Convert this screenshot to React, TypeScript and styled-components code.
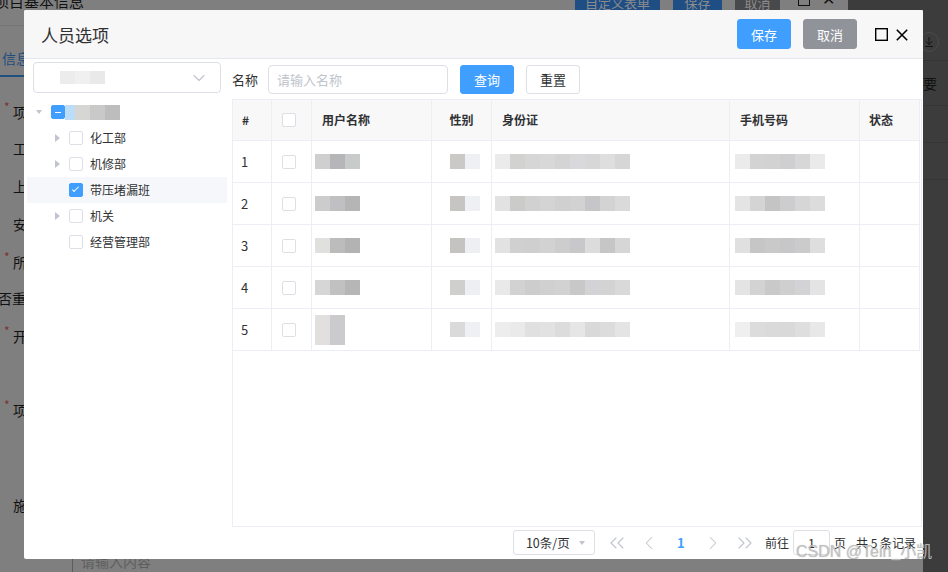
import React from "react";
import styled, { createGlobalStyle, css } from "styled-components";
import {
  ChevronDown,
  ChevronLeft,
  ChevronRight,
  ChevronsLeft,
  ChevronsRight,
  ArrowDownToLine,
} from "lucide-react";

const GlobalStyle = createGlobalStyle`
  html, body { margin: 0; padding: 0; background: #7f7f7f; }
  body { font-family: "Noto Sans CJK SC", "Noto Sans", sans-serif; }
  *, *::before, *::after { box-sizing: border-box; }
`;

/* ---------- page behind the mask ---------- */

const Screen = styled.div`
  position: relative;
  width: 948px;
  height: 572px;
  overflow: hidden;
  background: #7f7f7f;
  display: flex;
  flex-direction: column;
`;

const TopStrip = styled.div`
  height: 10px;
  flex: none;
  display: flex;
  align-items: flex-start;
  overflow: hidden;
`;

const PageTitle = styled.div`
  flex: 1;
  margin: -9px 0 0 -6px;
  font-size: 15px;
  line-height: 20px;
  color: #111;
  white-space: nowrap;
`;

const MaskedBtn = styled.div<{ $w: number; $bg: string; $ml: number }>`
  flex: none;
  width: ${(p) => p.$w}px;
  margin-left: ${(p) => p.$ml}px;
  height: 30px;
  margin-top: -12px;
  border-radius: 3px;
  background: ${(p) => p.$bg};
  color: #8c8c8c;
  font-size: 13px;
  line-height: 30px;
  text-align: center;
`;

const MaskedTools = styled.div`
  flex: none;
  width: 68px;
  display: flex;
  align-items: flex-start;
  gap: 12px;
  padding-left: 18px;
`;

const MaskedSquare = styled.span`
  display: block;
  width: 12px;
  height: 12px;
  margin-top: -6px;
  border: 1.5px solid #111;
`;

const MaskedX = styled.span`
  display: block;
  margin-top: -10px;
  font-size: 16px;
  line-height: 16px;
  color: #111;
`;

const DarkCorner = styled.div`
  flex: none;
  width: 100px;
  height: 10px;
  background: #3c3c3c;
`;

const PageMain = styled.div`
  flex: 1;
  display: flex;
  min-height: 0;
`;

const FormCol = styled.div`
  width: 24px;
  flex: none;
  display: flex;
  flex-direction: column;
`;

const FaintLine = styled.div`
  margin-top: 15px;
  height: 1px;
  background: #767676;
`;

const TabText = styled.div`
  margin-top: 22px;
  margin-left: 2px;
  font-size: 14px;
  line-height: 20px;
  color: #1f4d7e;
  white-space: nowrap;
`;

const TabLine = styled.div`
  margin-top: 7px;
  height: 2px;
  background: #20507f;
`;

const FormLabel = styled.div<{ $mt: number; $ml?: number }>`
  margin-top: ${(p) => p.$mt}px;
  margin-left: ${(p) => p.$ml ?? 13}px;
  height: 20px;
  font-size: 14px;
  line-height: 20px;
  color: #111;
  white-space: nowrap;
  position: relative;
`;

const Star = styled.span`
  position: absolute;
  left: -9px;
  top: -2px;
  font-size: 12px;
  line-height: 14px;
  color: #7d3131;
`;

const Center = styled.div`
  flex: 1;
  display: flex;
  flex-direction: column;
  justify-content: flex-end;
`;

const BottomField = styled.div`
  margin-left: 48px;
  height: 13px;
  border-left: 1px solid #5c5c5c;
  padding-left: 8px;
`;

const BottomPlaceholder = styled.span`
  display: block;
  margin-top: -5px;
  font-size: 14px;
  line-height: 14px;
  color: #5e5e5e;
  white-space: nowrap;
`;

const SideStrip = styled.div`
  width: 25px;
  flex: none;
  background: #3c3c3c;
  display: flex;
  flex-direction: column;
`;

const SideCircle = styled.div`
  margin: 22px 0 0 -4px;
  width: 20px;
  height: 20px;
  border-radius: 50%;
  border: 1px solid #4b4b4b;
  display: flex;
  align-items: center;
  justify-content: center;
`;

const SideRule = styled.div<{ $mt: number }>`
  margin-top: ${(p) => p.$mt}px;
  height: 1px;
  background: #353535;
`;

const SideText = styled.div`
  margin-top: 12px;
  font-size: 14px;
  line-height: 20px;
  color: #111;
`;

/* ---------- modal ---------- */

const Modal = styled.div`
  position: absolute;
  left: 24px;
  top: 10px;
  width: 899px;
  height: 549px;
  z-index: 2;
  background: #fff;
  border-radius: 2px;
  display: flex;
  flex-direction: column;
  overflow: hidden;
`;

const ModalHeader = styled.div`
  flex: none;
  height: 49px;
  background: #f7f7f7;
  border-bottom: 1px solid #e5e7ee;
  display: flex;
  align-items: center;
  padding: 0 15px 0 17px;
`;

const Title = styled.div`
  flex: 1;
  margin-top: 2px;
  font-size: 17px;
  line-height: 24px;
  color: #303133;
`;

type Variant = "primary" | "info" | "plain";

const Button = styled.button<{ $variant: Variant; $h: number; $ml?: number }>`
  flex: none;
  width: 54px;
  height: ${(p) => p.$h}px;
  margin-left: ${(p) => p.$ml ?? 0}px;
  padding: 0;
  border-radius: 3px;
  font-family: inherit;
  font-size: 13px;
  line-height: 1;
  cursor: pointer;
  ${(p) =>
    p.$variant === "primary"
      ? css`
          background: #409eff;
          border: 1px solid #409eff;
          color: #fff;
        `
      : p.$variant === "info"
      ? css`
          background: #909399;
          border: 1px solid #909399;
          color: #fff;
        `
      : css`
          background: #fff;
          border: 1px solid #dcdfe6;
          color: #303133;
        `}
`;

const HeaderIcons = styled.div`
  display: flex;
  align-items: center;
  gap: 8px;
  margin-left: 18px;
  margin-top: 1px;
`;

const ModalBody = styled.div`
  flex: 1;
  display: flex;
  min-height: 0;
`;

const LeftPanel = styled.div`
  width: 203px;
  flex: none;
  padding-top: 3px;
  display: flex;
  flex-direction: column;
`;

const SelectBox = styled.div`
  margin-left: 9px;
  width: 188px;
  height: 31px;
  border: 1px solid #dcdfe6;
  border-radius: 4px;
  display: flex;
  align-items: center;
  justify-content: space-between;
  padding: 0 11px 0 26px;
`;

const Tree = styled.div`
  margin: 6px 0 0 3px;
  display: flex;
  flex-direction: column;
`;

const TreeRow = styled.div<{ $level: number; $active?: boolean }>`
  width: 200px;
  height: 26px;
  display: flex;
  align-items: center;
  padding-left: ${(p) => p.$level * 18}px;
  background: ${(p) => (p.$active ? "#f5f7fa" : "transparent")};
`;

const Caret = styled.span<{ $open?: boolean; $leaf?: boolean }>`
  width: 24px;
  height: 26px;
  flex: none;
  display: flex;
  align-items: center;
  justify-content: center;
  &::before {
    content: "";
    display: ${(p) => (p.$leaf ? "none" : "block")};
    border-style: solid;
    ${(p) =>
      p.$open
        ? css`
            border-width: 4px 3.5px 0 3.5px;
            border-color: #c0c4cc transparent transparent transparent;
          `
        : css`
            border-width: 4px 0 4px 5px;
            border-color: transparent transparent transparent #c0c4cc;
          `}
  }
`;

type CheckState = "off" | "on" | "mixed";

const Check = styled.span<{ $state: CheckState }>`
  position: relative;
  display: block;
  flex: none;
  width: 14px;
  height: 14px;
  border-radius: 2px;
  border: 1px solid ${(p) => (p.$state === "off" ? "#dcdfe6" : "#409eff")};
  background: ${(p) => (p.$state === "off" ? "#fff" : "#409eff")};
  ${(p) =>
    p.$state === "on" &&
    css`
      &::after {
        content: "";
        position: absolute;
        left: 4px;
        top: 1px;
        width: 3px;
        height: 7px;
        border: 1px solid #fff;
        border-left: 0;
        border-top: 0;
        transform: rotate(45deg);
      }
    `}
  ${(p) =>
    p.$state === "mixed" &&
    css`
      &::after {
        content: "";
        position: absolute;
        left: 3px;
        right: 3px;
        top: 5.5px;
        height: 1.3px;
        background: #fff;
      }
    `}
`;

const TreeLabel = styled.span`
  margin-left: 7px;
  font-size: 12px;
  line-height: 16px;
  color: #303133;
  white-space: nowrap;
`;

const RightPanel = styled.div`
  flex: 1;
  min-width: 0;
  margin-left: 5px;
  padding-right: 1px;
  display: flex;
  flex-direction: column;
`;

const SearchBar = styled.div`
  flex: none;
  margin-top: 6px;
  height: 29px;
  display: flex;
  align-items: center;
`;

const SearchLabel = styled.span`
  font-size: 13px;
  line-height: 18px;
  color: #303133;
  margin-right: 10px;
`;

const SearchInput = styled.input`
  width: 180px;
  height: 29px;
  border: 1px solid #dcdfe6;
  border-radius: 4px;
  padding: 0 0 0 8px;
  font-family: inherit;
  font-size: 13px;
  color: #303133;
  outline: none;
  margin-right: 12px;
  &::placeholder {
    color: #c0c4cc;
  }
`;

const TableWrap = styled.div`
  flex: 1;
  min-height: 0;
  margin-top: 5px;
  border: 1px solid #ebeef5;
`;

const Grid = styled.div`
  display: grid;
  grid-template-columns: 39px 40px 120px 60px 238px 130px 60px;
`;

const HeadCell = styled.div<{ $center?: boolean; $pl?: number }>`
  height: 41px;
  background: #f8f8f9;
  border-right: 1px solid #ebeef5;
  border-bottom: 1px solid #ebeef5;
  display: flex;
  align-items: center;
  justify-content: ${(p) => (p.$center ? "center" : "flex-start")};
  padding-left: ${(p) => (p.$center ? 0 : p.$pl ?? 10)}px;
  font-size: 12px;
  font-weight: 700;
  line-height: 16px;
  color: #303133;
  white-space: nowrap;
`;

const BodyCell = styled.div<{ $pl?: number }>`
  height: 42px;
  border-right: 1px solid #ebeef5;
  border-bottom: 1px solid #ebeef5;
  display: flex;
  align-items: center;
  padding-left: ${(p) => p.$pl ?? 10}px;
  font-size: 13px;
  line-height: 16px;
  color: #303133;
`;

const Mosaic = styled.div<{ $ml?: number }>`
  display: flex;
  align-items: center;
  margin-left: ${(p) => p.$ml ?? 0}px;
`;

const Tile = styled.span<{ $c: string; $w: number; $h: number }>`
  display: block;
  width: ${(p) => p.$w}px;
  height: ${(p) => p.$h}px;
  background: ${(p) => p.$c};
`;

const Pager = styled.div`
  flex: none;
  margin-top: 3px;
  margin-bottom: 4px;
  height: 25px;
  display: flex;
  align-items: center;
  justify-content: flex-end;
  padding-right: 6px;
  font-size: 12px;
  line-height: 16px;
  color: #303133;
  white-space: nowrap;
`;

const SizeSelect = styled.div`
  width: 82px;
  height: 25px;
  border: 1px solid #dcdfe6;
  border-radius: 3px;
  display: flex;
  align-items: center;
  justify-content: space-between;
  padding: 0 9px 0 12px;
  font-size: 12.5px;
  &::after {
    content: "";
    border-style: solid;
    border-width: 4px 3px 0 3px;
    border-color: #c0c4cc transparent transparent transparent;
  }
`;

const PagerItem = styled.span<{ $active?: boolean; $ml?: number }>`
  width: 32px;
  height: 25px;
  margin-left: ${(p) => p.$ml ?? 0}px;
  display: flex;
  align-items: center;
  justify-content: center;
  font-size: 13px;
  font-weight: ${(p) => (p.$active ? 600 : 400)};
  color: ${(p) => (p.$active ? "#409eff" : "#c0c4cc")};
`;

const PagerText = styled.span<{ $ml: number }>`
  margin-left: ${(p) => p.$ml}px;
  font-size: 12px;
`;

const JumpInput = styled.div`
  margin-left: 4px;
  width: 37px;
  height: 25px;
  border: 1px solid #dcdfe6;
  border-radius: 3px;
  display: flex;
  align-items: center;
  justify-content: center;
  font-size: 12.5px;
`;

const Watermark = styled.div`
  position: absolute;
  left: 796px;
  top: 543px;
  z-index: 3;
  font-family: "Liberation Sans", "Noto Sans CJK SC", sans-serif;
  font-size: 16px;
  line-height: 18px;
  color: rgba(196, 196, 196, 0.9);
  text-shadow: 0 0 1px rgba(90, 90, 90, 0.45);
  white-space: nowrap;
  pointer-events: none;
`;

/* ---------- data ---------- */

type TileSpec = [string, number?, number?];

const tiles = (list: (string | TileSpec)[]) =>
  list.map((t, i) => {
    const [c, w, h] = typeof t === "string" ? [t, 15, 15] : [t[0], t[1] ?? 15, t[2] ?? 15];
    return <Tile key={i} $c={c} $w={w} $h={h} />;
  });

const rows: {
  name: (string | TileSpec)[];
  sex: string[];
  id: string[];
  phone: string[];
}[] = [
  {
    name: ["#cfcfcf", "#b6b6b8", "#c9caca"],
    sex: ["#cac9c6", "#eff0f3"],
    id: ["#ebebeb", "#d2d2d0", "#d6d6d6", "#d8d8d8", "#d4d4d4", "#d9d9dc", "#d7d7d7", "#dedede", "#d6d6d6"],
    phone: ["#ebebeb", "#d3d3d3", "#d2d2d2", "#cfcfd1", "#d7d7d7", "#eaeaea"],
  },
  {
    name: ["#cccccc", "#c0c0c2", "#b5b5b5"],
    sex: ["#c6c5c2", "#eff0f3"],
    id: ["#e2e2e2", "#cbcbc9", "#d1d1d1", "#d4d4d4", "#d0d0d0", "#d2d2d2", "#c6c6c8", "#d3d3d3", "#dadada"],
    phone: ["#e4e4e4", "#d4d4d4", "#c4c4c4", "#cdcdd0", "#d6d6d6", "#dcdcdc"],
  },
  {
    name: ["#e0e0de", "#bcbcbc", "#b2b3b2"],
    sex: ["#c4c3bf", "#eeeff3"],
    id: ["#e2e2e2", "#d0d0d0", "#cfcfcf", "#d2d2d2", "#cdcdcd", "#c8c8cb", "#dcdcdc", "#c6c6c6", "#d6d6d6"],
    phone: ["#e0e0e0", "#c6c6c6", "#c9c9c9", "#c7c7c9", "#cbcbcb", "#dedede"],
  },
  {
    name: ["#d6d6d6", "#c1c1c1", "#b6b6b6"],
    sex: ["#cfcfcc", "#eeeff3"],
    id: ["#e9e9e9", "#d2d2d2", "#cdcdcd", "#d0d0d0", "#d2d2d2", "#c8c8c8", "#d3d3d6", "#d3d3d3", "#d9d9d9"],
    phone: ["#e4e4e4", "#d3d3d3", "#c9c9c9", "#cfcfcf", "#d3d3d6", "#e4e4e4"],
  },
  {
    name: [["#e1e0de", 15, 30], ["#cbcbcd", 15, 30]],
    sex: ["#dadada", "#eff0f3"],
    id: ["#ededed", "#eaeaea", "#e0e0e0", "#e2e2e2", "#dcdcdc", "#e6e6e6", "#d9d9d9", "#dcdcdc", "#e4e4e4"],
    phone: ["#efefef", "#dcdcdc", "#dadada", "#d9d9d9", "#dedede", "#e8e8e8"],
  },
];

const departments: { label: string; leaf?: boolean; checked?: boolean }[] = [
  { label: "化工部" },
  { label: "机修部" },
  { label: "带压堵漏班", leaf: true, checked: true },
  { label: "机关" },
  { label: "经营管理部", leaf: true },
];

const SquareIcon = () => (
  <svg width="13" height="13" viewBox="0 0 13 13">
    <rect x="0.7" y="0.7" width="11.6" height="11.6" fill="none" stroke="#000" strokeWidth="1.4" />
  </svg>
);

const CloseIcon = () => (
  <svg width="12" height="12" viewBox="0 0 12 12">
    <path d="M0.8 0.8 11.2 11.2M11.2 0.8 0.8 11.2" stroke="#000" strokeWidth="1.6" fill="none" />
  </svg>
);

export default function App() {
  return (
    <Screen>
      <GlobalStyle />

      <TopStrip>
        <PageTitle>项目基本信息</PageTitle>
        <MaskedBtn $w={85} $ml={0} $bg="#1f4e84">自定义表单</MaskedBtn>
        <MaskedBtn $w={49} $ml={13} $bg="#1f4e84">保存</MaskedBtn>
        <MaskedBtn $w={45} $ml={13} $bg="#48494c">取消</MaskedBtn>
        <MaskedTools>
          <MaskedSquare />
          <MaskedX>✕</MaskedX>
        </MaskedTools>
        <DarkCorner />
      </TopStrip>

      <PageMain>
        <FormCol>
          <FaintLine />
          <TabText>信息</TabText>
          <TabLine />
          <FormLabel $mt={25}>
            <Star>*</Star>项
          </FormLabel>
          <FormLabel $mt={16}>工</FormLabel>
          <FormLabel $mt={18}>上</FormLabel>
          <FormLabel $mt={18}>安</FormLabel>
          <FormLabel $mt={18}>
            <Star>*</Star>所
          </FormLabel>
          <FormLabel $mt={16} $ml={-2}>否重</FormLabel>
          <FormLabel $mt={18}>
            <Star>*</Star>开
          </FormLabel>
          <FormLabel $mt={54}>
            <Star>*</Star>项
          </FormLabel>
          <FormLabel $mt={75}>施</FormLabel>
        </FormCol>
        <Center>
          <BottomField>
            <BottomPlaceholder>请输入内容</BottomPlaceholder>
          </BottomField>
        </Center>
        <SideStrip>
          <SideCircle>
            <ArrowDownToLine size={12} color="#111" strokeWidth={2} />
          </SideCircle>
          <SideRule $mt={8} />
          <SideText>要</SideText>
          <SideRule $mt={12} />
          <SideRule $mt={36} />
          <SideRule $mt={36} />
        </SideStrip>
      </PageMain>

      <Modal>
        <ModalHeader>
          <Title>人员选项</Title>
          <Button $variant="primary" $h={30}>保存</Button>
          <Button $variant="info" $h={30} $ml={12}>取消</Button>
          <HeaderIcons>
            <SquareIcon />
            <CloseIcon />
          </HeaderIcons>
        </ModalHeader>

        <ModalBody>
          <LeftPanel>
            <SelectBox>
              <Mosaic>{tiles([["#ececec", 15, 13], ["#f0f0f0", 15, 13], ["#e9e9e9", 15, 13]])}</Mosaic>
              <ChevronDown size={20} color="#c0c4cc" strokeWidth={1.3} />
            </SelectBox>
            <Tree>
              <TreeRow $level={0}>
                <Caret $open />
                <Check $state="mixed" />
                <Mosaic>{tiles([["#bcdcf8", 10], "#d6d6d4", "#c9c9c9", "#bdbdbd"])}</Mosaic>
              </TreeRow>
              {departments.map((d) => (
                <TreeRow key={d.label} $level={1} $active={d.checked}>
                  <Caret $leaf={d.leaf} />
                  <Check $state={d.checked ? "on" : "off"} />
                  <TreeLabel>{d.label}</TreeLabel>
                </TreeRow>
              ))}
            </Tree>
          </LeftPanel>

          <RightPanel>
            <SearchBar>
              <SearchLabel>名称</SearchLabel>
              <SearchInput placeholder="请输入名称" />
              <Button $variant="primary" $h={29}>查询</Button>
              <Button $variant="plain" $h={29} $ml={12}>重置</Button>
            </SearchBar>

            <TableWrap>
              <Grid>
                <HeadCell $pl={9}>#</HeadCell>
                <HeadCell>
                  <Check $state="off" />
                </HeadCell>
                <HeadCell>用户名称</HeadCell>
                <HeadCell $center>性别</HeadCell>
                <HeadCell>身份证</HeadCell>
                <HeadCell>手机号码</HeadCell>
                <HeadCell $pl={9}>状态</HeadCell>

                {rows.map((r, i) => (
                  <React.Fragment key={i}>
                    <BodyCell $pl={8}>{i + 1}</BodyCell>
                    <BodyCell>
                      <Check $state="off" />
                    </BodyCell>
                    <BodyCell $pl={3}>
                      <Mosaic>{tiles(r.name)}</Mosaic>
                    </BodyCell>
                    <BodyCell $pl={18}>
                      <Mosaic>{tiles(r.sex)}</Mosaic>
                    </BodyCell>
                    <BodyCell $pl={3}>
                      <Mosaic>{tiles(r.id)}</Mosaic>
                    </BodyCell>
                    <BodyCell $pl={5}>
                      <Mosaic>{tiles(r.phone)}</Mosaic>
                    </BodyCell>
                    <BodyCell />
                  </React.Fragment>
                ))}
              </Grid>
            </TableWrap>

            <Pager>
              <SizeSelect>10条/页</SizeSelect>
              <PagerItem $ml={6}>
                <ChevronsLeft size={24} strokeWidth={1.1} />
              </PagerItem>
              <PagerItem>
                <ChevronLeft size={22} strokeWidth={1.1} />
              </PagerItem>
              <PagerItem $active>1</PagerItem>
              <PagerItem>
                <ChevronRight size={22} strokeWidth={1.1} />
              </PagerItem>
              <PagerItem>
                <ChevronsRight size={24} strokeWidth={1.1} />
              </PagerItem>
              <PagerText $ml={4}>前往</PagerText>
              <JumpInput>1</JumpInput>
              <PagerText $ml={4}>页</PagerText>
              <PagerText $ml={10}>共 5 条记录</PagerText>
            </Pager>
          </RightPanel>
        </ModalBody>
      </Modal>

      <Watermark>CSDN @Tein_小凯</Watermark>
    </Screen>
  );
}
